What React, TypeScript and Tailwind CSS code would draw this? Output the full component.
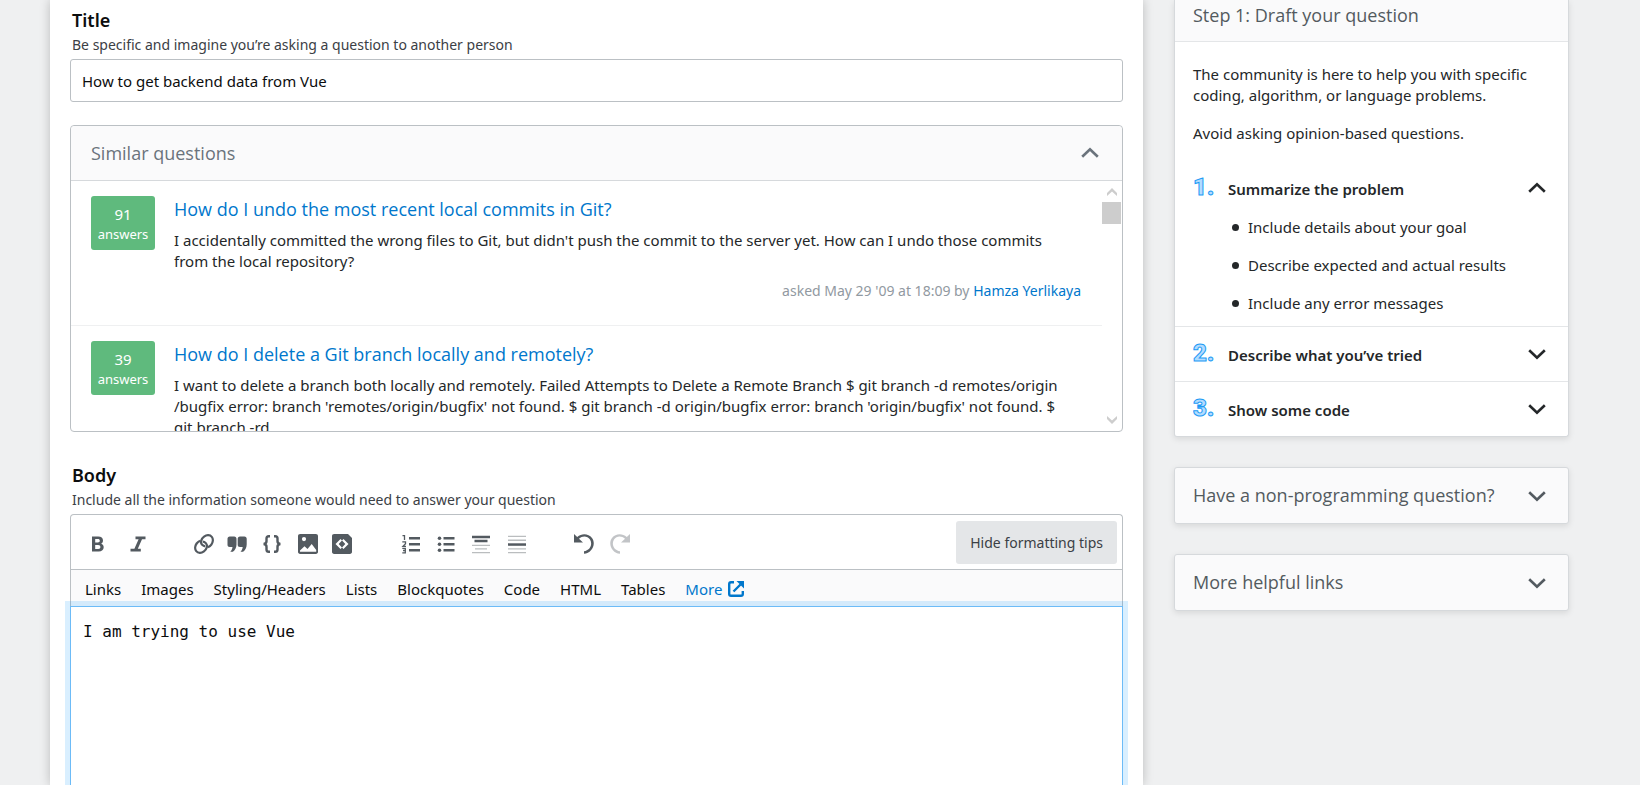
import { ReactNode, useState } from 'react';

interface Question {
  answers: number;
  title: string;
  excerpt: string;
  asked?: string;
  user?: string;
}

const questions: Question[] = [
  {
    answers: 91,
    title: 'How do I undo the most recent local commits in Git?',
    excerpt:
      "I accidentally committed the wrong files to Git, but didn't push the commit to the server yet. How can I undo those commits from the local repository?",
    asked: "asked May 29 '09 at 18:09 by",
    user: 'Hamza Yerlikaya',
  },
  {
    answers: 39,
    title: 'How do I delete a Git branch locally and remotely?',
    excerpt:
      "I want to delete a branch both locally and remotely. Failed Attempts to Delete a Remote Branch $ git branch -d remotes/origin\u200b/bugfix error: branch 'remotes/origin/bugfix' not found. $ git branch -d origin/bugfix error: branch 'origin/bugfix' not found. $ git branch -rd",
  },
];

const tips = ['Links', 'Images', 'Styling/Headers', 'Lists', 'Blockquotes', 'Code', 'HTML', 'Tables'];

function Chevron({ up = false }: { up?: boolean }) {
  return (
    <svg width="18" height="12" viewBox="0 0 18 12" fill="none" stroke="currentColor" strokeWidth="2.6">
      <path d={up ? 'M1.2 9.800L9 2.200l7.800 7.600' : 'M1.2 2.200L9 9.800l7.800-7.600'} />
    </svg>
  );
}

function ScrollArrow({ up = false }: { up?: boolean }) {
  return (
    <svg width="10" height="8" viewBox="0 0 10 8" fill="#cdcdcd">
      <path d={up ? 'M5 0l5 5v3L5 3.600 0 8V5z' : 'M5 8l5-5V0L5 4.400 0 0v3z'} />
    </svg>
  );
}

function ToolButton({ label, className = '', children }: { label: string; className?: string; children: ReactNode }) {
  return (
    <button type="button" aria-label={label} className={`flex h-5 w-5 items-center justify-center text-[#535a60] ${className}`}>
      <svg width="20" height="20" viewBox="0 0 20 20" fill="currentColor">
        {children}
      </svg>
    </button>
  );
}

function Toolbar() {
  return (
    <div className="flex items-center pt-[3px]">
      <ToolButton label="Bold">
        <path
          fillRule="evenodd"
          d="M4 2.500h6.300c2.900 0 4.700 1.500 4.700 4 0 1.500-.7 2.600-1.900 3.200 1.600.5 2.600 1.800 2.600 3.600 0 2.700-1.900 4.200-5 4.200H4zM7.200 5.100v3.400h2.600c1.300 0 2-.6 2-1.700s-.7-1.700-2-1.700zM7.200 11v3.900h3c1.500 0 2.200-.7 2.200-1.900s-.8-2-2.300-2z"
        />
      </ToolButton>
      <ToolButton label="Italic" className="ml-5">
        <path d="M7.500 2.500h10v2.700h-3.500L9.800 14.800h3v2.700H2.500v-2.700H6.400l4.200-9.600H7.500z" />
      </ToolButton>
      <ToolButton label="Link" className="ml-[46px]">
        <g fill="none" stroke="currentColor" strokeWidth="2.200">
          <path d="M11.300 12.300C9.300 12.300 6.200 10.300 7.200 6.600 8.200 3.300 11.500 1.100 14.200 1.200c3 .1 5 2.500 4.600 5.600-.3 2.700-2.400 5.200-4.900 6.500" />
          <path d="M8.700 7.700c2 0 5.100 2 4.100 5.700-1 3.300-4.300 5.500-7 5.400-3-.1-5-2.500-4.600-5.600.3-2.700 2.400-5.200 4.900-6.500" />
        </g>
      </ToolButton>
      <ToolButton label="Blockquote" className="ml-[13px]">
        <path d="M2.800 2.500h4.400C8.700 2.500 9.500 3.500 9.500 4.800v5.700c0 3.200-1.500 5.600-3.600 7.300H3.300c1.300-1.400 2.100-2.900 2.200-4.800H2.800C1.300 13 .5 12.200.5 10.800v-6C.5 3.500 1.300 2.500 2.800 2.500zM13 2.500h4.400c1.500 0 2.300 1 2.300 2.300v5.700c0 3.200-1.500 5.600-3.600 7.300h-2.600c1.300-1.400 2.100-2.900 2.200-4.800H13c-1.500 0-2.300-.8-2.300-2.200v-6C10.700 3.500 11.500 2.500 13 2.500z" />
      </ToolButton>
      <ToolButton label="Code sample" className="ml-[15px]">
        <g fill="none" stroke="currentColor" strokeWidth="2.400">
          <path d="M8 2.300H6.800C5.300 2.300 4.500 3 4.500 4.600v2.700c0 1.700-.8 2.500-2.900 2.700 2.100.2 2.900 1 2.900 2.700v2.700c0 1.600.8 2.300 2.300 2.300H8" />
          <path d="M12 2.300h1.200c1.500 0 2.300.7 2.300 2.300v2.700c0 1.700.8 2.500 2.900 2.700-2.100.2-2.900 1-2.900 2.700v2.700c0 1.600-.8 2.300-2.300 2.300H12" />
        </g>
      </ToolButton>
      <ToolButton label="Image" className="ml-4">
        <path
          fillRule="evenodd"
          d="M2.200 0h15.600C19.200 0 20 .9 20 2.200v15.600c0 1.300-.8 2.200-2.200 2.200H2.200C.8 20 0 19.100 0 17.800V2.200C0 .9.800 0 2.200 0zM6 3a2.100 2.100 0 100 4.200A2.100 2.100 0 006 3zM2 17.800h16.200v-1.800l-4.500-6-4.200 5-3-2.800L2 16.500z"
        />
      </ToolButton>
      <ToolButton label="Snippet" className="ml-[14px]">
        <path
          fillRule="evenodd"
          d="M2.200 0H16l4 4v13.800c0 1.300-.8 2.200-2.200 2.200H2.200C.8 20 0 19.100 0 17.800V2.200C0 .9.800 0 2.200 0zM8.500 5L3.500 10l5 5 1.500-1.600L6.700 10 10 6.600zM11.500 5L10 6.600 13.300 10 10 13.400l1.500 1.600 5-5z"
        />
      </ToolButton>
      <ToolButton label="Numbered list" className="ml-[49px]">
        <path d="M8 3h11v2.600H8zM8 9h11v2.600H8zM8 15h11v2.600H8z" />
        <path d="M1.500 1.700h2V6M1.300 7.900h3.200v1.900L2 12.300h3M1.300 14.300h3v4.500h-3M2 16.500h2" fill="none" stroke="currentColor" strokeWidth="1.300" />
      </ToolButton>
      <ToolButton label="Bulleted list" className="ml-[15px]">
        <path d="M7.500 3h11v2.600h-11zM7.500 9h11v2.600h-11zM7.500 15h11v2.600h-11z" />
        <circle cx="3.500" cy="4.300" r="1.800" />
        <circle cx="3.500" cy="10.300" r="1.800" />
        <circle cx="3.500" cy="16.300" r="1.800" />
      </ToolButton>
      <ToolButton label="Heading" className="ml-[15px]">
        <path d="M1 1.800h18v2.400H1zM3.500 5.800h13v2.400h-13z" />
        <path opacity=".4" d="M1 10.800h18v1.300H1zM4 14.200h12v1.300H4zM1 18h18v1.300H1z" />
      </ToolButton>
      <ToolButton label="Horizontal rule" className="ml-4">
        <path d="M1 9.300h18v2.500H1z" />
        <path opacity=".4" d="M1 1.800h18v1.300H1zM1 5.600h18v1.300H1zM1 14.200h18v1.300H1zM1 18h18v1.300H1z" />
      </ToolButton>
      <ToolButton label="Undo" className="ml-[47px]">
        <path d="M0 0l3.200 3C8-1 14.500-.3 18 4c4.500 6-.2 15.500-8 15.800v-2.500c5.800-.5 9-6.800 6-11.700C13.500 1.900 8.500 1.600 5 4.800l4 3.700H0z" />
      </ToolButton>
      <ToolButton label="Redo" className="ml-4 opacity-35">
        <path d="M20 0l-3.200 3C12-1 5.500-.3 2 4c-4.500 6 .2 15.500 8 15.800v-2.500c-5.800-.5-9-6.800-6-11.700C6.500 1.900 11.500 1.600 15 4.800l-4 3.700h9z" />
      </ToolButton>
    </div>
  );
}

function SimilarQuestions() {
  return (
    <section className="mt-[23px] rounded border border-[#bbc0c4]">
      <button
        type="button"
        className="flex h-[55px] w-full items-center justify-between rounded-t border-b border-[#d6d9dc] bg-[#fafafb] pr-[23px] pl-5 font-['Open_Sans',sans-serif] text-[18px] text-[#6a737c]"
      >
        Similar questions
        <Chevron up />
      </button>
      <div className="flex h-[250px] overflow-hidden">
        <div className="min-w-0 flex-1">
          {questions.map((q) => (
            <article key={q.title} className="flex gap-[19px] border-b border-[#eff0f1] pt-[15px] pr-[21px] pb-6 pl-5">
              <div className="flex h-[54px] w-16 shrink-0 flex-col items-center justify-center rounded-[3px] bg-[#5fba7d] pt-0.5 text-white">
                <span className="text-[15px] leading-5">{q.answers}</span>
                <span className="text-[13px] leading-5">answers</span>
              </div>
              <div className="min-w-0 flex-1">
                <a href="#" className="block font-['Open_Sans',sans-serif] text-[18px] leading-[26px] text-[#0077cc]">
                  {q.title}
                </a>
                <p className="mt-2 pr-5 text-[15px] leading-[21px] text-[#242729]">{q.excerpt}</p>
                {q.user && (
                  <p className="mt-2 text-right text-[14px] leading-[21px] text-[#9199a1]">
                    {q.asked}{' '}
                    <a href="#" className="text-[#0077cc]">
                      {q.user}
                    </a>
                  </p>
                )}
              </div>
            </article>
          ))}
        </div>
        <div className="mr-px flex w-[19px] flex-col items-center justify-between pt-[7px] pb-[7px]">
          <div className="flex w-full flex-col items-center gap-[6px]">
            <ScrollArrow up />
            <div className="h-[22px] w-full bg-[#cdcdcd]" />
          </div>
          <ScrollArrow />
        </div>
      </div>
    </section>
  );
}

function Step({ number, label, open = false, children }: { number: number; label: string; open?: boolean; children?: ReactNode }) {
  return (
    <li className="border-b border-[#e4e6e8] last:border-b-0">
      <button type="button" aria-expanded={open} className="flex h-[54px] w-full items-center pr-[22px] pl-[18px] text-[#242729]">
        <svg width="26" height="40" viewBox="0 0 26 40" className="mr-[9px]">
          <text
            x="0"
            y="27"
            fontFamily="Roboto, sans-serif"
            fontWeight="900"
            fontSize="24"
            fill="#b3dcff"
            stroke="#1c9bf5"
            strokeWidth="1"
          >
            {number}.
          </text>
        </svg>
        <span className="flex-1 pt-[3px] text-left text-[15px] font-semibold">{label}</span>
        <Chevron up={open} />
      </button>
      {children}
    </li>
  );
}

function CollapsedCard({ title }: { title: string }) {
  return (
    <button
      type="button"
      className="mt-[30px] flex h-[57px] w-full items-center justify-between rounded-[3px] border border-[#d6d9dc] bg-[#fafafb] pr-[22px] pl-[18px] font-['Open_Sans',sans-serif] text-[18px] text-[#535a60] shadow-[0_2px_6px_rgba(0,0,0,0.1)]"
    >
      {title}
      <Chevron />
    </button>
  );
}

function Sidebar() {
  return (
    <aside className="w-[395px] shrink-0">
      <section className="rounded-b-[3px] border border-t-0 border-[#d6d9dc] bg-white shadow-[0_2px_6px_rgba(0,0,0,0.1)]">
        <h2 className="border-b border-[#e4e6e8] bg-[#fafafb] px-[18px] pt-[3px] pb-[13px] font-['Open_Sans',sans-serif] text-[18px] leading-[25px] text-[#535a60]">
          Step 1: Draft your question
        </h2>
        <div className="px-[18px] pt-[22px] pb-[17px] text-[15px] leading-[21px] text-[#242729]">
          <p>The community is here to help you with specific coding, algorithm, or language problems.</p>
          <p className="mt-[17px]">Avoid asking opinion-based questions.</p>
        </div>
        <ol>
          <Step number={1} label="Summarize the problem" open>
            <ul className="flex flex-col gap-[17px] pt-[2px] pb-3 pl-[57px] text-[15px] leading-[21px] text-[#242729]">
              {['Include details about your goal', 'Describe expected and actual results', 'Include any error messages'].map((item) => (
                <li key={item} className="flex items-center gap-[9px]">
                  <span className="h-[7px] w-[7px] rounded-full bg-[#242729]" />
                  {item}
                </li>
              ))}
            </ul>
          </Step>
          <Step number={2} label="Describe what you’ve tried" />
          <Step number={3} label="Show some code" />
        </ol>
      </section>
      <CollapsedCard title="Have a non-programming question?" />
      <CollapsedCard title="More helpful links" />
    </aside>
  );
}

export default function App() {
  const [title, setTitle] = useState('How to get backend data from Vue');
  const [body, setBody] = useState('I am trying to use Vue');

  return (
    <div className="flex h-screen items-stretch gap-[31px] overflow-hidden bg-[#eff0f1] pr-[71px] pl-[50px] font-['Noto_Sans',sans-serif]">
      <main className="flex min-w-0 flex-1 flex-col bg-white px-5 pt-2 shadow-[0_0_10px_rgba(0,0,0,0.22)]">
        <label htmlFor="title" className="px-0.5 text-[18px] leading-6 font-semibold text-[#0c0d0e]">
          Title
        </label>
        <p className="px-0.5 pt-0.5 text-[14px] leading-[21px] text-[#3b4045]">Be specific and imagine you’re asking a question to another person</p>
        <input
          id="title"
          value={title}
          onChange={(e) => setTitle(e.target.value)}
          className="mt-1 h-[43px] w-full rounded-[3px] border border-[#bbc0c4] bg-white px-[11px] text-[15px] text-[#0c0d0e] outline-none"
        />

        <SimilarQuestions />

        <label htmlFor="body" className="mt-[31px] px-0.5 text-[18px] leading-6 font-semibold text-[#0c0d0e]">
          Body
        </label>
        <p className="px-0.5 pt-0.5 text-[14px] leading-[21px] text-[#3b4045]">Include all the information someone would need to answer your question</p>
        <div className="mt-1 flex flex-1 flex-col rounded-t border-x border-t border-[#bbc0c4]">
          <div className="flex h-[55px] shrink-0 items-center justify-between border-b border-[#bbc0c4] pr-[5px] pl-[17px]">
            <Toolbar />
            <button type="button" className="h-[43px] rounded-[3px] bg-[#e4e6e8] px-[14px] text-[14px] text-[#3b4045]">
              Hide formatting tips
            </button>
          </div>
          <nav className="flex h-9 shrink-0 items-center gap-5 bg-[#fafafb] pt-0.5 pl-[14px] text-[15px] text-[#0c0d0e]">
            {tips.map((tip) => (
              <button key={tip} type="button">
                {tip}
              </button>
            ))}
            <a href="#" className="flex items-center gap-[6px] text-[#0077cc]">
              More
              <svg width="16" height="16" viewBox="0 0 16 16" fill="none" stroke="currentColor" strokeWidth="2.400">
                <path d="M6 1.200H3Q1.200 1.200 1.200 3v10q0 1.800 1.800 1.800h10q1.800 0 1.800-1.800V10M5.500 10.500l7-7" />
                <path d="M8.500 0H16v7.500z" fill="currentColor" stroke="none" />
              </svg>
            </a>
          </nav>
          <textarea
            id="body"
            value={body}
            onChange={(e) => setBody(e.target.value)}
            className="-mx-px flex-1 resize-none border border-b-0 border-[#6cbbf7] bg-white px-3 pt-[14px] font-['DejaVu_Sans_Mono',monospace] text-[16px] leading-[22px] text-[#0c0d0e] shadow-[0_0_0_5px_rgba(0,149,255,0.15)] outline-none"
          />
        </div>
      </main>
      <Sidebar />
    </div>
  );
}
